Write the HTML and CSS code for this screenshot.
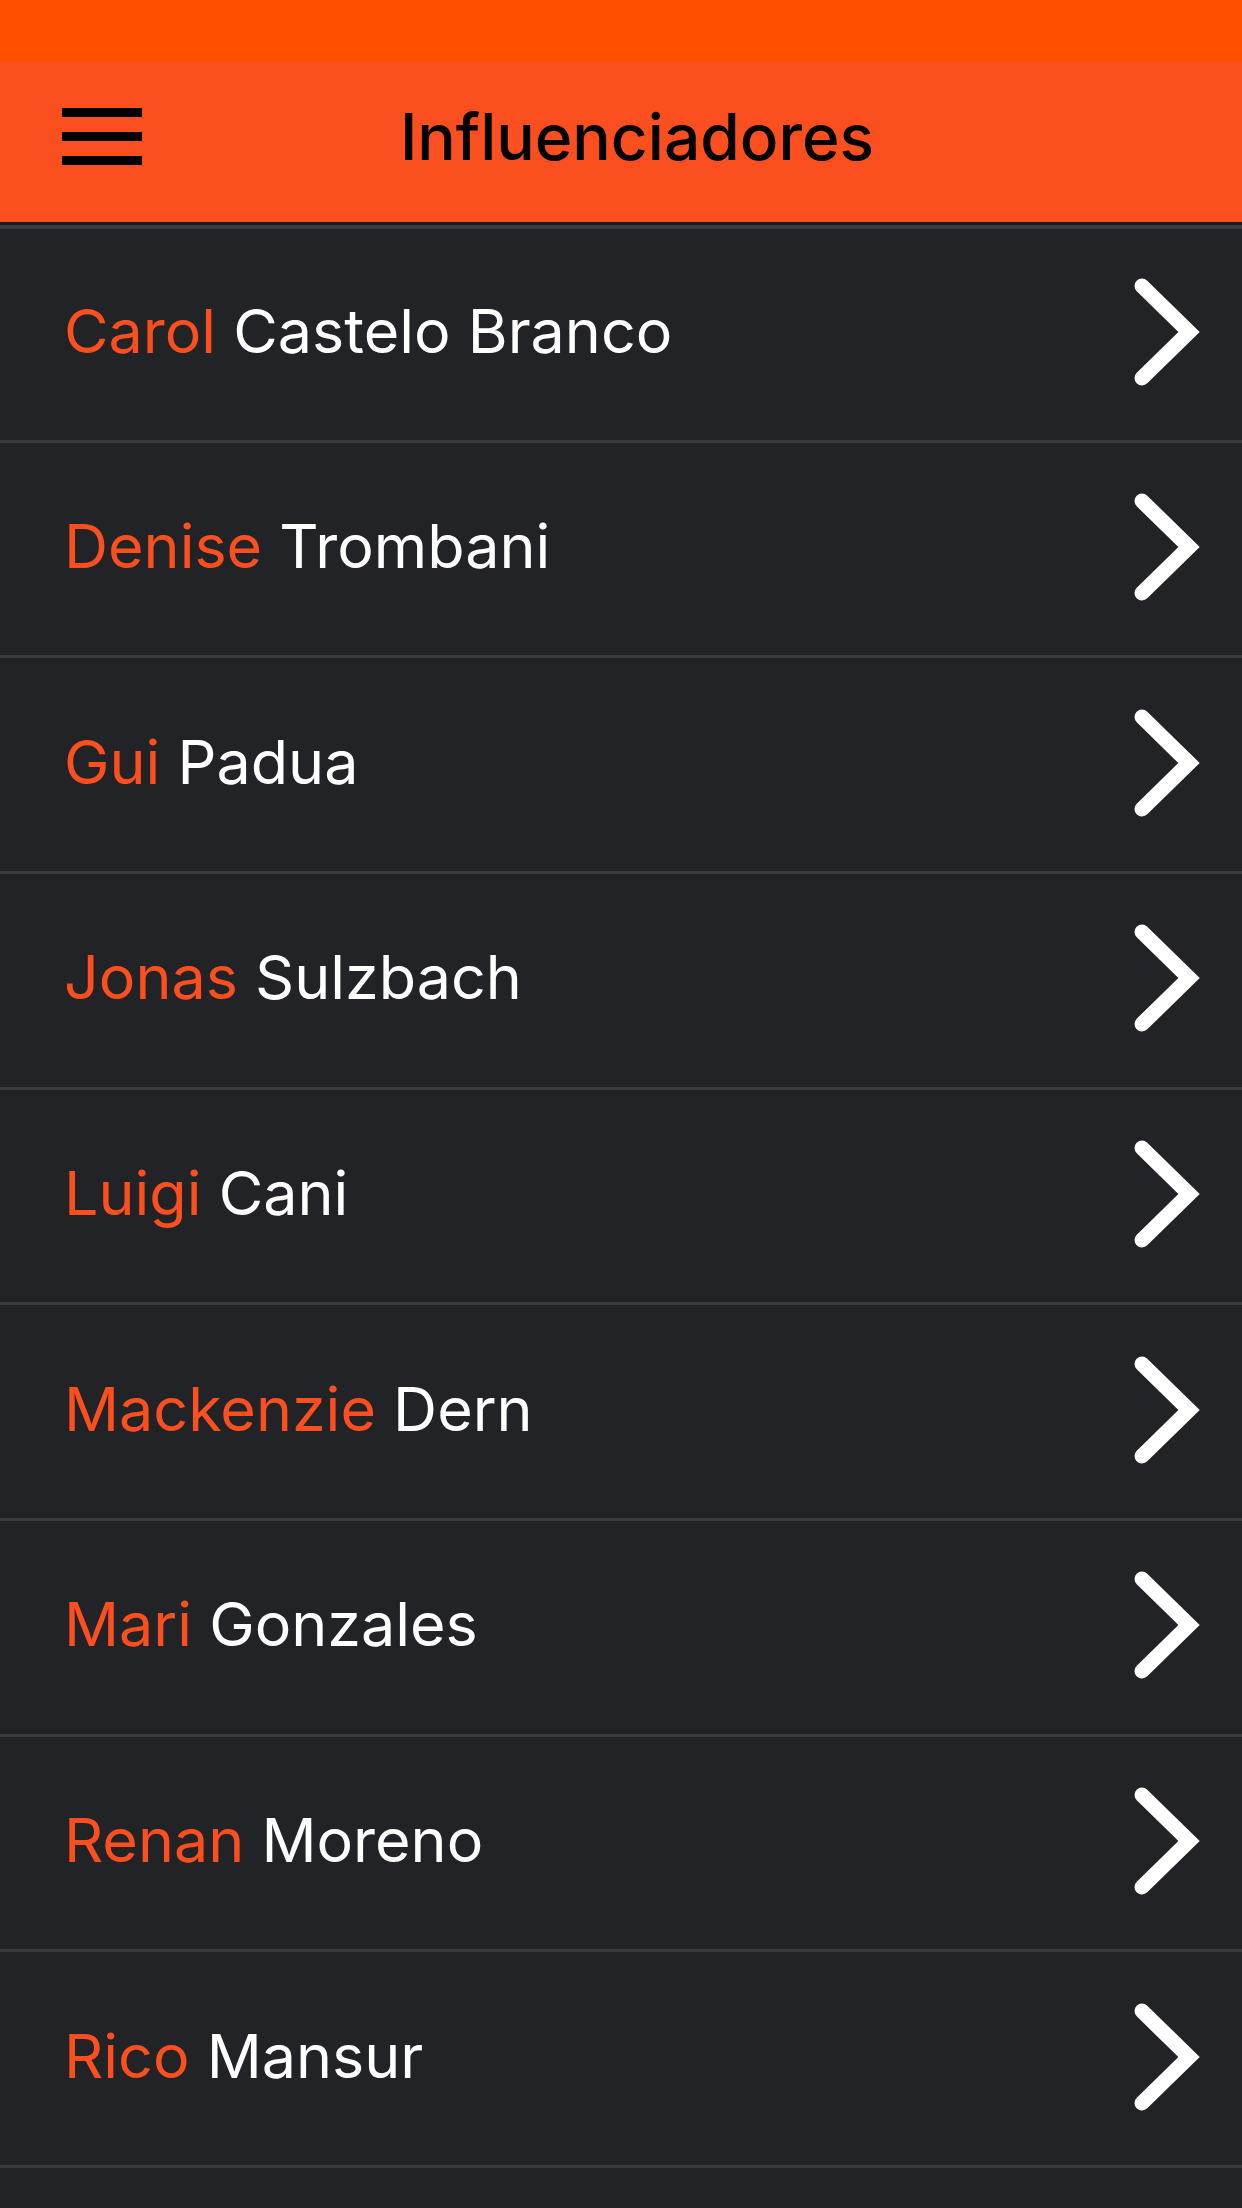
FILE: index.html
```html
<!DOCTYPE html>
<html lang="pt">
<head>
  <meta charset="UTF-8">
  <meta name="viewport" content="width=device-width, initial-scale=1.0">
  <title>Influenciadores</title>
  <link rel="stylesheet" href="styles.css">
</head>
<body>
  <div class="status-bar"></div>

  <!-- Top bar -->
  <header class="topbar">
    <button class="menu-btn" aria-label="Menu">
      <span></span>
      <span></span>
      <span></span>
    </button>
    <h1 class="title">Influenciadores</h1>
  </header>

  <!-- Influencer list -->
  <ul class="list" id="list"></ul>

  <script>
    const influencers = [
      ["Carol", "Castelo Branco"],
      ["Denise", "Trombani"],
      ["Gui", "Padua"],
      ["Jonas", "Sulzbach"],
      ["Luigi", "Cani"],
      ["Mackenzie", "Dern"],
      ["Mari", "Gonzales"],
      ["Renan", "Moreno"],
      ["Rico", "Mansur"]
    ];

    const list = document.getElementById("list");
    influencers.forEach(([first, last]) => {
      const li = document.createElement("li");
      li.className = "row";
      li.innerHTML =
        `<span class="name"><span class="first">${first}</span> ${last}</span>` +
        `<svg class="chevron" viewBox="0 0 72 120" width="72" height="120">` +
        `<polyline points="10,12 57,58 10,104" fill="none" stroke="#fff" stroke-width="15" stroke-linecap="round" stroke-linejoin="miter"/>` +
        `</svg>`;
      list.appendChild(li);
    });
  </script>
</body>
</html>
```

FILE: styles.css
```css
body {
  margin: 0;
  background-color: #222327;
  font-family: 'Inter', 'Liberation Sans', sans-serif;
  width: 1242px;
  height: 2208px;
  overflow: hidden;
}
.status-bar {
  height: 62px;
  background-color: #ff5000;
}
.topbar {
  box-sizing: border-box;
  height: 163px;
  display: flex;
  align-items: center;
  padding: 0 110px 12px 62px;
  background-color: #fc4f1f;
  border-bottom: 3px solid #1b1c1f;
}
.menu-btn {
  width: 80px;
  height: 57px;
  padding: 0;
  border: none;
  background: none;
  display: flex;
  flex-direction: column;
  justify-content: space-between;
}
.menu-btn span {
  display: block;
  height: 9px;
  background-color: #000;
}
.title {
  flex: 1;
  margin: 0;
  text-align: center;
  font-size: 64px;
  font-weight: 500;
  color: #000;
}
.list {
  list-style: none;
  margin: 0;
  padding: 0;
  border-top: 4px solid #3a3b40;
}
.row {
  box-sizing: border-box;
  height: 215.7px;
  display: flex;
  align-items: center;
  justify-content: space-between;
  padding: 0 38px 0 64px;
  border-bottom: 3px solid #3a3b40;
}
.row:first-child {
  height: 213.5px;
}
.name {
  font-size: 61px;
  color: #fff;
  margin-bottom: 6px;
}
.first {
  color: #fc4f1f;
}
.chevron {
  display: block;
}
```
